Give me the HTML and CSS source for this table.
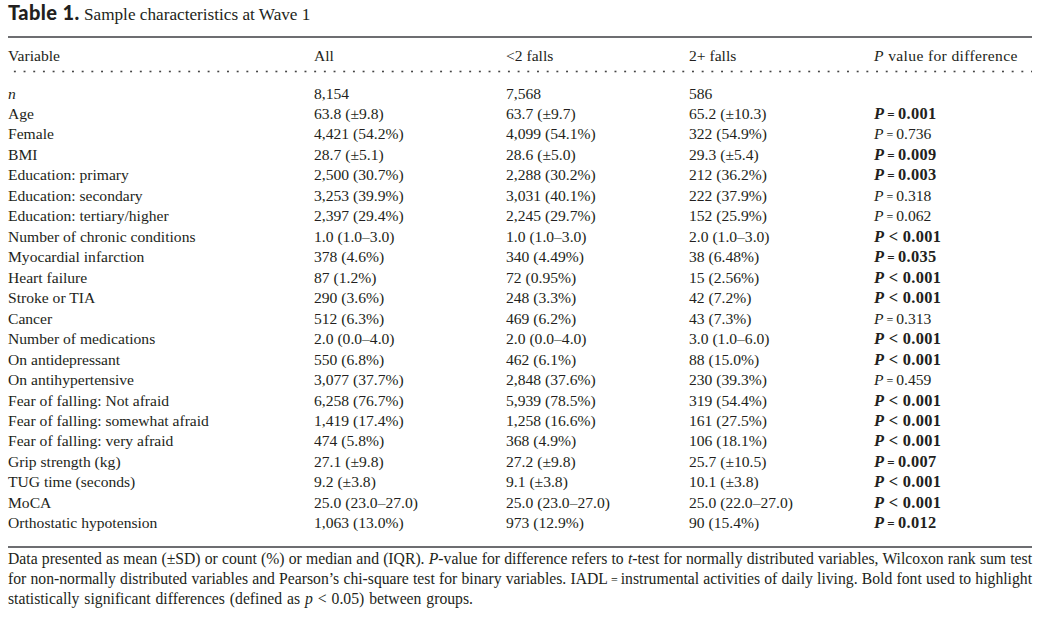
FILE: index.html
```html
<!DOCTYPE html>
<html>
<head>
<meta charset="utf-8">
<link rel="stylesheet" href="styles.css">
</head>
<body>
<div class="page">
  <h1 class="title"><span class="label">Table 1.</span> <span class="caption">Sample characteristics at Wave 1</span></h1>
  <div class="table">
    <div class="row head"><div>Variable</div><div>All</div><div>&lt;2 falls</div><div>2+ falls</div><div><i>P</i> value for difference</div></div>
    <div class="body">
      <div class="row"><div><i>n</i></div><div>8,154</div><div>7,568</div><div>586</div><div></div></div>
      <div class="row"><div>Age</div><div>63.8 (±9.8)</div><div>63.7 (±9.7)</div><div>65.2 (±10.3)</div><div class="sig"><i>P</i><span class="eq">=</span>0.001</div></div>
      <div class="row"><div>Female</div><div>4,421 (54.2%)</div><div>4,099 (54.1%)</div><div>322 (54.9%)</div><div><i>P</i><span class="eq">=</span>0.736</div></div>
      <div class="row"><div>BMI</div><div>28.7 (±5.1)</div><div>28.6 (±5.0)</div><div>29.3 (±5.4)</div><div class="sig"><i>P</i><span class="eq">=</span>0.009</div></div>
      <div class="row"><div>Education: primary</div><div>2,500 (30.7%)</div><div>2,288 (30.2%)</div><div>212 (36.2%)</div><div class="sig"><i>P</i><span class="eq">=</span>0.003</div></div>
      <div class="row"><div>Education: secondary</div><div>3,253 (39.9%)</div><div>3,031 (40.1%)</div><div>222 (37.9%)</div><div><i>P</i><span class="eq">=</span>0.318</div></div>
      <div class="row"><div>Education: tertiary/higher</div><div>2,397 (29.4%)</div><div>2,245 (29.7%)</div><div>152 (25.9%)</div><div><i>P</i><span class="eq">=</span>0.062</div></div>
      <div class="row"><div>Number of chronic conditions</div><div>1.0 (1.0–3.0)</div><div>1.0 (1.0–3.0)</div><div>2.0 (1.0–3.0)</div><div class="sig"><i>P</i> &lt; 0.001</div></div>
      <div class="row"><div>Myocardial infarction</div><div>378 (4.6%)</div><div>340 (4.49%)</div><div>38 (6.48%)</div><div class="sig"><i>P</i><span class="eq">=</span>0.035</div></div>
      <div class="row"><div>Heart failure</div><div>87 (1.2%)</div><div>72 (0.95%)</div><div>15 (2.56%)</div><div class="sig"><i>P</i> &lt; 0.001</div></div>
      <div class="row"><div>Stroke or TIA</div><div>290 (3.6%)</div><div>248 (3.3%)</div><div>42 (7.2%)</div><div class="sig"><i>P</i> &lt; 0.001</div></div>
      <div class="row"><div>Cancer</div><div>512 (6.3%)</div><div>469 (6.2%)</div><div>43 (7.3%)</div><div><i>P</i><span class="eq">=</span>0.313</div></div>
      <div class="row"><div>Number of medications</div><div>2.0 (0.0–4.0)</div><div>2.0 (0.0–4.0)</div><div>3.0 (1.0–6.0)</div><div class="sig"><i>P</i> &lt; 0.001</div></div>
      <div class="row"><div>On antidepressant</div><div>550 (6.8%)</div><div>462 (6.1%)</div><div>88 (15.0%)</div><div class="sig"><i>P</i> &lt; 0.001</div></div>
      <div class="row"><div>On antihypertensive</div><div>3,077 (37.7%)</div><div>2,848 (37.6%)</div><div>230 (39.3%)</div><div><i>P</i><span class="eq">=</span>0.459</div></div>
      <div class="row"><div>Fear of falling: Not afraid</div><div>6,258 (76.7%)</div><div>5,939 (78.5%)</div><div>319 (54.4%)</div><div class="sig"><i>P</i> &lt; 0.001</div></div>
      <div class="row"><div>Fear of falling: somewhat afraid</div><div>1,419 (17.4%)</div><div>1,258 (16.6%)</div><div>161 (27.5%)</div><div class="sig"><i>P</i> &lt; 0.001</div></div>
      <div class="row"><div>Fear of falling: very afraid</div><div>474 (5.8%)</div><div>368 (4.9%)</div><div>106 (18.1%)</div><div class="sig"><i>P</i> &lt; 0.001</div></div>
      <div class="row"><div>Grip strength (kg)</div><div>27.1 (±9.8)</div><div>27.2 (±9.8)</div><div>25.7 (±10.5)</div><div class="sig"><i>P</i><span class="eq">=</span>0.007</div></div>
      <div class="row"><div>TUG time (seconds)</div><div>9.2 (±3.8)</div><div>9.1 (±3.8)</div><div>10.1 (±3.8)</div><div class="sig"><i>P</i> &lt; 0.001</div></div>
      <div class="row"><div>MoCA</div><div>25.0 (23.0–27.0)</div><div>25.0 (23.0–27.0)</div><div>25.0 (22.0–27.0)</div><div class="sig"><i>P</i> &lt; 0.001</div></div>
      <div class="row"><div>Orthostatic hypotension</div><div>1,063 (13.0%)</div><div>973 (12.9%)</div><div>90 (15.4%)</div><div class="sig"><i>P</i><span class="eq">=</span>0.012</div></div>
    </div>
  </div>
  <div class="note">
    <span class="line">Data presented as mean (±SD) or count (%) or median and (IQR). <i>P</i>-value for difference refers to <i>t</i>-test for normally distributed variables, Wilcoxon rank sum test</span>
    <span class="line">for non-normally distributed variables and Pearson’s chi-square test for binary variables. IADL<span class="eq">=</span>instrumental activities of daily living. Bold font used to highlight</span>
    <span class="line last">statistically significant differences (defined as <i>p</i> &lt; 0.05) between groups.</span>
  </div>
</div>
</body>
</html>
```
FILE: styles.css
```css
html, body {
  margin: 0;
  padding: 0;
  background: #ffffff;
}
.page {
  width: 1024px;
  padding-left: 8px;
  color: #231f20;
  font-family: "Liberation Serif", "Times New Roman", serif;
}
.title {
  margin: 0;
  height: 36px;
  padding-top: 2px;
  box-sizing: border-box;
  font-weight: normal;
  font-size: 17.2px;
  line-height: 20px;
  white-space: nowrap;
}
.title .label {
  font-family: Lato, "DejaVu Sans", sans-serif;
  font-weight: 900;
  font-size: 20px;
  letter-spacing: 0.4px;
}
.table {
  border-top: 2px solid #6d6e71;
  border-bottom: 2px solid #6d6e71;
  font-size: 15.6px;
}
.row {
  display: grid;
  grid-template-columns: 306px 192px 183px 185px 1fr;
  height: 20.48px;
  line-height: 20.48px;
  white-space: nowrap;
}
.row.head {
  height: 35px;
  align-items: center;
  padding-top: 1px;
  box-sizing: border-box;
  background-image: radial-gradient(circle, #444 0.9px, transparent 1.2px);
  background-size: 9.7px 3px;
  background-repeat: repeat-x;
  background-position: 2px bottom;
}
.row.head > div:last-child {
  letter-spacing: 0.35px;
}
.body {
  padding-top: 10.5px;
  padding-bottom: 12.5px;
}
.sig {
  font-weight: bold;
  font-size: 16.4px;
  letter-spacing: 0.3px;
}
.eq {
  font-size: 12px;
  line-height: 0;
  margin: 0 3px;
}
.sig .eq {
  font-size: 13px;
}
.note {
  padding-top: 1px;
  font-size: 15.7px;
  line-height: 20px;
  word-spacing: -0.6px;
}
.note .line {
  display: block;
  white-space: nowrap;
  text-align: justify;
  text-align-last: justify;
}
.note .line.last {
  text-align-last: left;
  word-spacing: 1px;
}
```
